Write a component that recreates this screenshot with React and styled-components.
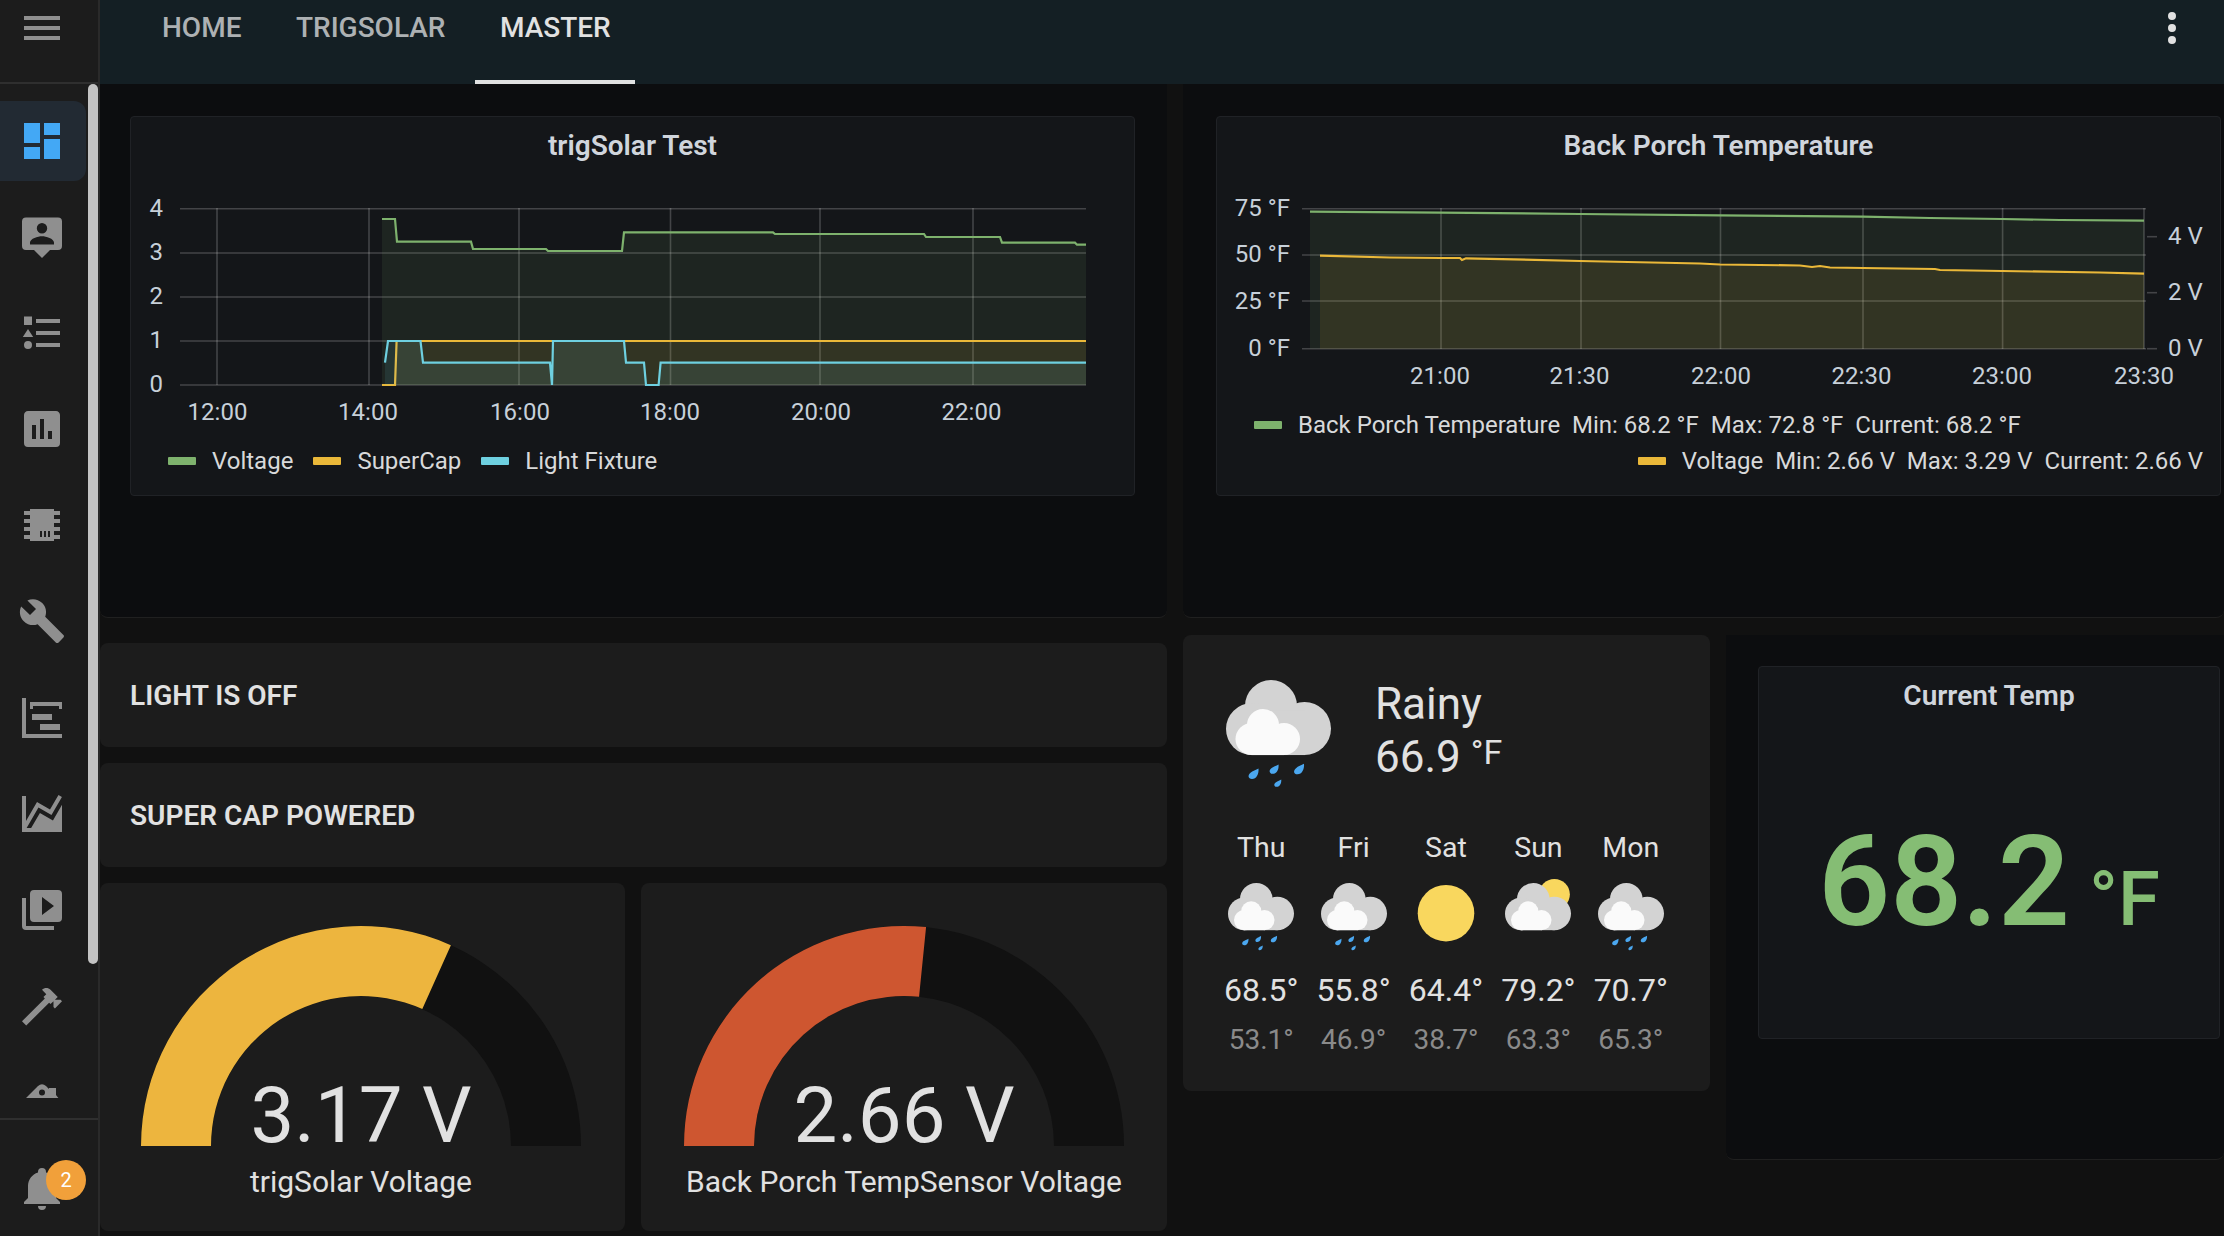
import React from 'react'
import styled, { createGlobalStyle } from 'styled-components'

const GlobalStyle = createGlobalStyle`
  html, body {
    margin: 0;
    height: 100%;
    overflow: hidden;
    background: #111111;
    font-family: Roboto, "Liberation Sans", sans-serif;
  }
`

const Page = styled.div`
  display: flex;
  width: 100%;
  height: 100vh;
  overflow: hidden;
`

/* sidebar */

const Sidebar = styled.aside`
  display: flex;
  flex-direction: column;
  flex: none;
  box-sizing: border-box;
  width: 100px;
  height: 100%;
  background: #1c1c1c;
  border-right: 2px solid #2a2a2a;
`

const SidebarTop = styled.div`
  flex: none;
  box-sizing: border-box;
  height: 84px;
  padding: 4px 0 0 18px;
  border-bottom: 2px solid #2f2f2f;
`

const NavList = styled.nav`
  position: relative;
  flex: 1;
  overflow: hidden;
  padding-top: 16.5px;
`

const NavItem = styled.div`
  display: flex;
  align-items: center;
  box-sizing: border-box;
  width: 86px;
  height: 80px;
  margin-bottom: 16.2px;
  padding-left: 18px;
  border-radius: 0 12px 12px 0;
  background: ${({ $active }) => ($active ? '#222a33' : 'transparent')};
`

const ScrollThumb = styled.div`
  position: absolute;
  top: 0;
  right: 0;
  width: 10px;
  height: 880px;
  border-radius: 5px;
  background: #c4c4c4;
`

const SidebarBottom = styled.div`
  position: relative;
  flex: none;
  box-sizing: border-box;
  height: 118px;
  padding: 44px 0 0 18px;
  border-top: 2px solid #2f2f2f;
`

const Badge = styled.div`
  position: absolute;
  top: 40px;
  left: 46px;
  width: 40px;
  height: 40px;
  border-radius: 50%;
  background: #f1a03a;
  color: #ffffff;
  font-size: 20px;
  line-height: 40px;
  text-align: center;
`

const IconSvg = styled.svg`
  display: block;
  flex: none;
  width: 48px;
  height: 48px;
  fill: ${({ $color }) => $color || '#8f8f8f'};
`

const Icon = ({ d, color }) => (
  <IconSvg viewBox="0 0 24 24" $color={color}>
    <path d={d} fillRule="evenodd" />
  </IconSvg>
)

const navIcons = [
  'M13,3V9H21V3M13,21H21V11H13M3,21H11V15H3M3,13H11V3H3V13Z',
  'M4 2.2H20A2 2 0 0 1 22 4.2V16.5A2 2 0 0 1 20 18.5H16L12 22.5L8 18.5H4A2 2 0 0 1 2 16.5V4.2A2 2 0 0 1 4 2.2Z M12 5A2.6 2.6 0 1 0 12 10.2A2.6 2.6 0 1 0 12 5Z M6 14.8C6 12.8 10 11.6 12 11.6C14 11.6 18 12.8 18 14.8V15.8H6Z',
  'M3 3.8H7V8H3Z M9 5H21V7H9Z M5 10L7.6 14H2.4Z M9 11H21V13H9Z M5 16A2 2 0 1 1 5 20A2 2 0 1 1 5 16Z M9 17H21V19H9Z',
  'M17,17H15V13H17M13,17H11V7H13M9,17H7V10H9M19,3H5C3.89,3 3,3.89 3,5V19A2,2 0 0,0 5,21H19A2,2 0 0,0 21,19V5C21,3.89 20.1,3 19,3Z',
  'M6,4H18V5H21V7H18V9H21V11H18V13H21V15H18V17H21V19H18V20H6V19H3V17H6V15H3V13H6V11H3V9H6V7H3V5H6V4M11,15V18H12V15H11M13,15V18H14V15H13M15,15V18H16V15H15Z',
  'M22.7,19L13.6,9.9C14.5,7.6 14,4.9 12.1,3C10.1,1 7.1,0.6 4.7,1.7L9,6L6,9L1.6,4.7C0.4,7.1 0.9,10.1 2.9,12.1C4.8,14 7.5,14.5 9.8,13.6L18.9,22.7C19.3,23.1 19.9,23.1 20.3,22.7L22.6,20.4C23.1,20 23.1,19.3 22.7,19Z',
  'M2 2H4V20H22V22H2Z M6 4H22V7.5H20.5V6H7.5V7.5H6Z M7 10H17V13H7Z M11 15H21V18H11Z',
  'M22,21H2V3H4V15.54L9.5,6L16,9.78L20.24,2.45L21.97,3.45L16.74,12.5L10.23,8.75L4.31,19H6.57L10.96,11.44L17.47,15.2L22,7.37V21Z',
  'M4,6H2V20A2,2 0 0,0 4,22H18V20H4M20,2H8A2,2 0 0,0 6,4V16A2,2 0 0,0 8,18H20A2,2 0 0,0 22,16V4A2,2 0 0,0 20,2M12,14.5V5.5L18,10L12,14.5Z',
  'M2 19.63L13.43 8.2L12.72 7.5L14.14 6.07L12 3.89C13.2 2.7 15.09 2.7 16.27 3.89L19.87 7.5L18.45 8.91H21.29L22 9.62L18.45 13.21L17.74 12.5V9.62L16.27 11.04L15.56 10.33L4.13 21.76L2 19.63Z',
  'M4 10L10 4Q12 2.2 14 4L15.5 5.5V5H19V8.5L20.2 10Z M12 5.7A1.5 1.5 0 1 0 12 8.7A1.5 1.5 0 1 0 12 5.7Z',
]

/* header */

const Main = styled.div`
  flex: 1;
  min-width: 0;
  height: 100%;
`

const Header = styled.header`
  display: flex;
  align-items: flex-start;
  justify-content: space-between;
  box-sizing: border-box;
  height: 84px;
  padding: 0 28px 0 37.5px;
  background: #141f24;
`

const Tabs = styled.div`
  display: flex;
  gap: 5.5px;
`

const Tab = styled.div`
  box-sizing: border-box;
  height: 84px;
  padding: 0 24.5px;
  font-size: 28px;
  font-weight: 500;
  line-height: 56px;
  color: ${({ $active }) => ($active ? '#e1e1e1' : '#adb1b3')};
  border-bottom: 4px solid ${({ $active }) => ($active ? '#e1e1e1' : 'transparent')};
`

const MenuButton = styled.div`
  padding-top: 4px;
`

/* dashboard grid */

const Board = styled.div`
  display: grid;
  grid-template-columns: 1067px 1fr;
  column-gap: 16px;
`

const Column = styled.div`
  display: flex;
  flex-direction: column;
  min-width: 0;
`

const Frame = styled.div`
  box-sizing: border-box;
  background: #0c0d0f;
  border-bottom: 1px solid #202020;
  border-radius: 0 0 8px 8px;
`

const ChartFrame = styled(Frame)`
  height: 534px;
  padding: ${({ $side }) => ($side === 'left' ? '32px 32px 0 30px' : '32px 3px 0 33px')};
`

const Panel = styled.div`
  box-sizing: border-box;
  height: ${({ $height }) => $height}px;
  background: #141619;
  border: 1px solid #202226;
  border-radius: 4px;
`

const PanelTitle = styled.div`
  height: 62px;
  font-size: 28px;
  font-weight: 600;
  line-height: 58px;
  text-align: center;
  color: #d0d5dc;
`

const ChartSvg = styled.svg`
  display: block;
  width: 100%;
  height: ${({ $height }) => $height}px;
`

const GridLine = styled.line`
  stroke: rgba(255, 255, 255, 0.2);
  stroke-width: 1.6;
`

const AxisLabel = styled.text`
  fill: #c7d0d9;
  font-size: 24px;
`

const Legend = styled.div`
  display: flex;
  align-items: center;
  height: 36px;
  justify-content: ${({ $end }) => ($end ? 'flex-end' : 'flex-start')};
  padding: ${({ $end }) => ($end ? '0 17px 0 0' : '0 0 0 37px')};
  color: #d8d9da;
  font-size: 24px;
  white-space: pre;
`

const Swatch = styled.span`
  flex: none;
  width: 28px;
  height: 8px;
  margin-right: 16px;
  border-radius: 1px;
  background: ${({ $color }) => $color};
`

const LegendText = styled.span`
  margin-right: ${({ $gap }) => $gap || 0}px;
`

const StatStack = styled.div`
  display: flex;
  flex-direction: column;
  gap: 16px;
  margin: 25px 0 16px;
`

const StatBlock = styled.div`
  display: flex;
  align-items: center;
  box-sizing: border-box;
  height: 104px;
  padding-left: 30px;
  background: #1c1c1c;
  border-radius: 8px;
  color: #e1e1e1;
  font-size: 28px;
  font-weight: 600;
`

const GaugeRow = styled.div`
  display: grid;
  grid-template-columns: 525px 1fr;
  gap: 16px;
`

const GaugeCard = styled.div`
  display: flex;
  flex-direction: column;
  align-items: center;
  box-sizing: border-box;
  height: 348px;
  padding: 43px ${({ $inset }) => $inset || 0}px 0 0;
  background: #1c1c1c;
  border-radius: 8px;
`

const GaugeSvg = styled.svg`
  display: block;
  overflow: visible;
  width: 440px;
  height: 220px;
`

const GaugeValue = styled.text`
  fill: #e1e1e1;
  font-size: 78px;
  text-anchor: middle;
`

const GaugeLabel = styled.div`
  margin-top: 18px;
  color: #e1e1e1;
  font-size: 30px;
  line-height: 36px;
`

const LowerRow = styled.div`
  display: flex;
  align-items: flex-start;
  gap: 16px;
  margin-top: 17px;
`

/* weather */

const WeatherCard = styled.div`
  flex: none;
  box-sizing: border-box;
  width: 527px;
  height: 456px;
  padding: 42px 33px 0 32px;
  background: #1c1c1c;
  border-radius: 8px;
  color: #e1e1e1;
`

const WeatherNow = styled.div`
  display: flex;
  gap: 44px;
  height: 111px;
  padding: 3px 0 0 11px;
`

const WeatherState = styled.div`
  font-size: 44px;
  line-height: 48px;
`

const WeatherTemp = styled.div`
  font-size: 44px;
  line-height: 48px;
`

const WeatherUnit = styled.span`
  margin-left: 10px;
  font-size: 34px;
  vertical-align: 8px;
`

const Forecast = styled.div`
  display: grid;
  grid-template-columns: repeat(5, 1fr);
  margin-top: 41px;
`

const ForecastDay = styled.div`
  display: flex;
  flex-direction: column;
  align-items: center;
`

const DayName = styled.div`
  font-size: 28.5px;
  line-height: 32px;
`

const DayHigh = styled.div`
  margin-top: 22px;
  font-size: 32px;
  line-height: 36px;
`

const DayLow = styled.div`
  margin-top: 16px;
  color: #8a8a8a;
  font-size: 28px;
  line-height: 32px;
`

const WeatherSvg = styled.svg`
  display: block;
  overflow: visible;
  width: ${({ $size }) => $size}px;
  height: ${({ $size }) => $size * 1.02}px;
  margin-top: ${({ $top }) => $top || 0}px;
`

const Rain = ({ x, y, s }) => (
  <path
    transform={`translate(${x} ${y}) scale(${s})`}
    d="M5.5,-5.5C6,0 3.5,5 -1,5C-5,5 -5.5,1 -2.5,-1.2C-0.5,-3 3,-4 5.5,-5.5Z"
    fill="#4ba7ef"
  />
)

const Cloud = () => (
  <>
    <g fill="#d3d3d3">
      <circle cx="45" cy="26" r="26" />
      <circle cx="26" cy="49" r="26" />
      <circle cx="78.5" cy="48.5" r="26.5" />
      <rect x="26" y="30" width="53" height="45" />
    </g>
    <g fill="#fafafa">
      <circle cx="37" cy="45" r="16" />
      <circle cx="25.5" cy="59" r="16" />
      <circle cx="58" cy="59" r="16" />
      <rect x="25" y="52" width="33" height="23" />
    </g>
  </>
)

const WeatherIcon = ({ kind, size, top }) => (
  <WeatherSvg viewBox="0 0 105 107" $size={size} $top={top}>
    {kind === 'sunny' && <circle cx="52.5" cy="48" r="45" fill="#f9d75e" />}
    {kind === 'partly' && <circle cx="78.6" cy="18" r="24.6" fill="#f9d75e" />}
    {kind !== 'sunny' && <Cloud />}
    {kind === 'rainy' && (
      <>
        <Rain x={27} y={94} s={1} />
        <Rain x={47.6} y={89.3} s={0.9} />
        <Rain x={72.5} y={89.3} s={1} />
        <Rain x={51.4} y={103.3} s={0.7} />
      </>
    )}
  </WeatherSvg>
)

/* current temp */

const TempFrame = styled(Frame)`
  flex: 1;
  height: 525px;
  padding: 31px 4px 0 32px;
`

const TempValue = styled.div`
  margin-top: 58px;
  color: #85bd74;
  font-size: 126px;
  font-weight: 600;
  line-height: 190px;
  text-align: center;
`

const TempUnit = styled.span`
  margin-left: 19px;
  font-size: 76px;
  font-weight: 500;
`

/* chart data, in page pixels */

const toPoints = (pts) => pts.map((p) => p.join(',')).join(' ')
const toArea = (pts, base) =>
  toPoints([[pts[0][0], base], ...pts, [pts[pts.length - 1][0], base]])

const voltage = [
  [382, 219], [395, 219], [397, 241.7], [471, 241.7], [473, 249], [546, 249], [548, 251], [622, 251],
  [624, 232.3], [773, 232.3], [775, 234], [924, 234], [926, 237], [1000, 237], [1002, 242.7],
  [1075, 242.7], [1077, 244.7], [1086, 244.7],
]
const superCap = [[382, 385], [395, 385], [396.6, 341], [1086, 341]]
const lightFixture = [
  [385, 362.7], [388, 341], [420.5, 341], [423, 362.7], [550, 362.7], [552, 385], [553, 341], [624, 341],
  [626, 362.7], [644, 362.7], [646, 385], [658.6, 385], [660.6, 362.7], [1086, 362.7],
]
const porchTemp = [
  [1310, 211.7], [1441, 212.6], [1580, 214], [1720, 215.3], [1863, 216.6], [1930, 218], [2002, 219],
  [2060, 220], [2144, 220.7],
]
const porchVoltage = [
  [1320, 255.7], [1390, 257.5], [1441, 258], [1460, 258], [1462, 260], [1466, 258.3], [1580, 261],
  [1700, 263.5], [1720, 264.5], [1800, 265.5], [1812, 267], [1820, 266], [1830, 267.5], [1863, 268],
  [1935, 269], [1940, 270], [2002, 271], [2100, 272.5], [2144, 273.7],
]

const GREEN = '#7eb26d'
const YELLOW = '#eab839'
const BLUE = '#6ed0e0'

const Series = ({ pts, base, color }) => (
  <>
    <polygon points={toArea(pts, base)} fill={color} fillOpacity="0.1" />
    <polyline points={toPoints(pts)} fill="none" stroke={color} strokeWidth="2.2" />
  </>
)

const TrigSolarChart = () => (
  <ChartSvg viewBox="131 179 1003 264" $height={264}>
    {[208.7, 253, 297, 341, 385].map((y) => (
      <GridLine key={y} x1="180" x2="1086" y1={y} y2={y} />
    ))}
    {[217, 369, 519, 670.5, 820, 973].map((x) => (
      <GridLine key={x} x1={x} x2={x} y1="208" y2="385" />
    ))}
    <Series pts={voltage} base={385} color={GREEN} />
    <Series pts={superCap} base={385} color={YELLOW} />
    <Series pts={lightFixture} base={385} color={BLUE} />
    {[['4', 216], ['3', 260], ['2', 304], ['1', 348], ['0', 392]].map(([t, y]) => (
      <AxisLabel key={t} x="163" y={y} textAnchor="end">{t}</AxisLabel>
    ))}
    {[['12:00', 217.5], ['14:00', 368], ['16:00', 520], ['18:00', 670], ['20:00', 821], ['22:00', 971.5]].map(([t, x]) => (
      <AxisLabel key={t} x={x} y="420" textAnchor="middle">{t}</AxisLabel>
    ))}
  </ChartSvg>
)

const PorchChart = () => (
  <ChartSvg viewBox="1217 179 1003 228" $height={228}>
    {[208.7, 255, 301, 348.7].map((y) => (
      <GridLine key={y} x1="1302" x2="2146" y1={y} y2={y} />
    ))}
    {[1441, 1581, 1720.5, 1863, 2002.6, 2144].map((x) => (
      <GridLine key={x} x1={x} x2={x} y1="208" y2="349" />
    ))}
    {[236.7, 292.7, 348.7].map((y) => (
      <GridLine key={y} x1="2147" x2="2157" y1={y} y2={y} />
    ))}
    <Series pts={porchTemp} base={348.7} color={GREEN} />
    <Series pts={porchVoltage} base={348.7} color={YELLOW} />
    {[['75 °F', 215.5], ['50 °F', 262], ['25 °F', 309], ['0 °F', 356]].map(([t, y]) => (
      <AxisLabel key={t} x="1290" y={y} textAnchor="end">{t}</AxisLabel>
    ))}
    {[['4 V', 243.5], ['2 V', 300], ['0 V', 356]].map(([t, y]) => (
      <AxisLabel key={t} x="2168" y={y}>{t}</AxisLabel>
    ))}
    {[['21:00', 1440], ['21:30', 1579.5], ['22:00', 1721], ['22:30', 1861.5], ['23:00', 2002], ['23:30', 2144]].map(([t, x]) => (
      <AxisLabel key={t} x={x} y="384" textAnchor="middle">{t}</AxisLabel>
    ))}
  </ChartSvg>
)

/* gauge arcs in a 440x220 box, centre at the bottom middle */

const arcPath = (from, to) => {
  const pt = (r, f) => {
    const a = Math.PI * (1 - f)
    return `${(220 + r * Math.cos(a)).toFixed(2)} ${(220 - r * Math.sin(a)).toFixed(2)}`
  }
  return `M${pt(220, from)}A220 220 0 0 1 ${pt(220, to)}L${pt(150, to)}A150 150 0 0 0 ${pt(150, from)}Z`
}

const Gauge = ({ value, color, label, inset }) => (
  <GaugeCard $inset={inset}>
    <GaugeSvg viewBox="0 0 440 220">
      <path d={arcPath(0, 1)} fill="#111111" />
      <path d={arcPath(0, value / 5)} fill={color} />
      <GaugeValue x="220" y="216">{value} V</GaugeValue>
    </GaugeSvg>
    <GaugeLabel>{label}</GaugeLabel>
  </GaugeCard>
)

const forecast = [
  { day: 'Thu', kind: 'rainy', high: '68.5°', low: '53.1°' },
  { day: 'Fri', kind: 'rainy', high: '55.8°', low: '46.9°' },
  { day: 'Sat', kind: 'sunny', high: '64.4°', low: '38.7°' },
  { day: 'Sun', kind: 'partly', high: '79.2°', low: '63.3°' },
  { day: 'Mon', kind: 'rainy', high: '70.7°', low: '65.3°' },
]

export default function App() {
  return (
    <Page>
      <GlobalStyle />
      <Sidebar>
        <SidebarTop>
          <Icon d="M3,6H21V8H3V6M3,11H21V13H3V11M3,16H21V18H3V16Z" />
        </SidebarTop>
        <NavList>
          {navIcons.map((d, i) => (
            <NavItem key={d} $active={i === 0}>
              <Icon d={d} color={i === 0 ? '#43a8f5' : undefined} />
            </NavItem>
          ))}
          <ScrollThumb />
        </NavList>
        <SidebarBottom>
          <Icon d="M21,19V20H3V19L5,17V11C5,7.9 7.03,5.17 10,4.29C10,4.19 10,4.1 10,4A2,2 0 0,1 12,2A2,2 0 0,1 14,4C14,4.1 14,4.19 14,4.29C16.97,5.17 19,7.9 19,11V17L21,19M14,21A2,2 0 0,1 12,23A2,2 0 0,1 10,21" />
          <Badge>2</Badge>
        </SidebarBottom>
      </Sidebar>
      <Main>
        <Header>
          <Tabs>
            <Tab>HOME</Tab>
            <Tab>TRIGSOLAR</Tab>
            <Tab $active>MASTER</Tab>
          </Tabs>
          <MenuButton>
            <Icon
              color="#e1e1e1"
              d="M12,16A2,2 0 0,1 14,18A2,2 0 0,1 12,20A2,2 0 0,1 10,18A2,2 0 0,1 12,16M12,10A2,2 0 0,1 14,12A2,2 0 0,1 12,14A2,2 0 0,1 10,12A2,2 0 0,1 12,10M12,4A2,2 0 0,1 14,6A2,2 0 0,1 12,8A2,2 0 0,1 10,6A2,2 0 0,1 12,4Z"
            />
          </MenuButton>
        </Header>
        <Board>
          <Column>
            <ChartFrame $side="left">
              <Panel $height={380}>
                <PanelTitle>trigSolar Test</PanelTitle>
                <TrigSolarChart />
                <Legend>
                  <Swatch $color={GREEN} />
                  <LegendText $gap={20}>Voltage</LegendText>
                  <Swatch $color={YELLOW} />
                  <LegendText $gap={20}>SuperCap</LegendText>
                  <Swatch $color={BLUE} />
                  <LegendText>Light Fixture</LegendText>
                </Legend>
              </Panel>
            </ChartFrame>
            <StatStack>
              <StatBlock>LIGHT IS OFF</StatBlock>
              <StatBlock>SUPER CAP POWERED</StatBlock>
            </StatStack>
            <GaugeRow>
              <Gauge value={3.17} color="#edb53e" label="trigSolar Voltage" inset={3} />
              <Gauge value={2.66} color="#ce5630" label="Back Porch TempSensor Voltage" />
            </GaugeRow>
          </Column>
          <Column>
            <ChartFrame $side="right">
              <Panel $height={380}>
                <PanelTitle>Back Porch Temperature</PanelTitle>
                <PorchChart />
                <Legend>
                  <Swatch $color={GREEN} />
                  <LegendText>Back Porch Temperature  Min: 68.2 °F  Max: 72.8 °F  Current: 68.2 °F</LegendText>
                </Legend>
                <Legend $end>
                  <Swatch $color={YELLOW} />
                  <LegendText>Voltage  Min: 2.66 V  Max: 3.29 V  Current: 2.66 V</LegendText>
                </Legend>
              </Panel>
            </ChartFrame>
            <LowerRow>
              <WeatherCard>
                <WeatherNow>
                  <WeatherIcon kind="rainy" size={105} />
                  <div>
                    <WeatherState>Rainy</WeatherState>
                    <WeatherTemp>66.9<WeatherUnit>°F</WeatherUnit></WeatherTemp>
                  </div>
                </WeatherNow>
                <Forecast>
                  {forecast.map((f) => (
                    <ForecastDay key={f.day}>
                      <DayName>{f.day}</DayName>
                      <WeatherIcon kind={f.kind} size={66} top={19} />
                      <DayHigh>{f.high}</DayHigh>
                      <DayLow>{f.low}</DayLow>
                    </ForecastDay>
                  ))}
                </Forecast>
              </WeatherCard>
              <TempFrame>
                <Panel $height={373}>
                  <PanelTitle>Current Temp</PanelTitle>
                  <TempValue>68.2<TempUnit>°F</TempUnit></TempValue>
                </Panel>
              </TempFrame>
            </LowerRow>
          </Column>
        </Board>
      </Main>
    </Page>
  )
}
